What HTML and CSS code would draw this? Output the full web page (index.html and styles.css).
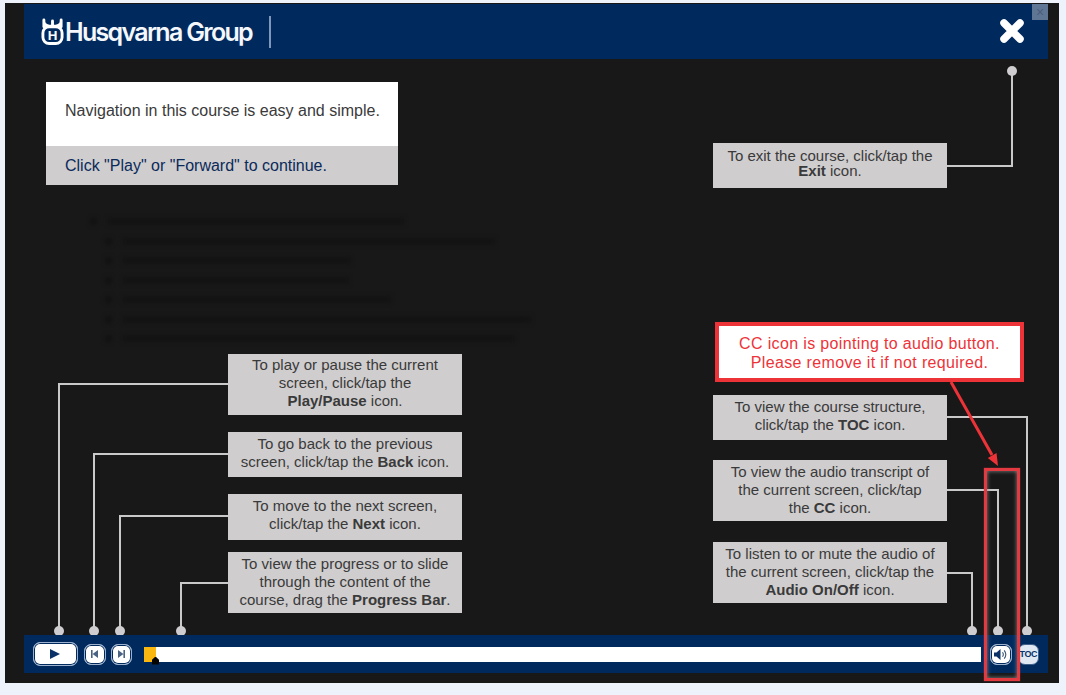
FILE: index.html
```html
<!DOCTYPE html>
<html lang="en">
<head>
    <meta charset="UTF-8">
    <meta name="viewport" content="width=device-width, initial-scale=1.0">
    <title>Husqvarna Group - Navigation</title>
    <link rel="stylesheet" href="styles.css">
</head>
<body>
    <div class="frame">
        <header class="topbar">
            <svg class="logo-mark" width="23" height="27" viewBox="0 0 24 28">
                <path d="M3 9V2M12 8V3M21 9V2M3 3.5c0 4 4 5 9 5s9-1 9-5" fill="none" stroke="#fff" stroke-width="3" stroke-linecap="round"/>
                <rect x="2" y="9" width="20" height="17.5" rx="6.5" fill="none" stroke="#fff" stroke-width="3"/>
                <text x="12" y="23.3" text-anchor="middle" class="logo-h">H</text>
            </svg>
            <span class="logo-text">Husqvarna Group</span>
            <span class="logo-rule"></span>
            <button class="close-btn" aria-label="Exit">
                <svg width="26" height="26" viewBox="0 0 26 26">
                    <path d="M5 5L21 21M21 5L5 21" stroke="#fff" stroke-width="7.5" stroke-linecap="round"/>
                </svg>
            </button>
            <span class="corner-box">×</span>
        </header>

        <main class="stage">
            <div class="intro">
                <p class="intro-top">Navigation in this course is easy and simple.</p>
                <p class="intro-bottom">Click "Play" or "Forward" to continue.</p>
            </div>
            <!-- dimmed slide content behind the overlay -->
            <div class="ghost">
                <div class="ghost-row"><i class="ghost-dot"></i><b style="width: 296px"></b></div>
                <div class="ghost-row sub"><i class="ghost-dot"></i><b style="width: 372px"></b></div>
                <div class="ghost-row sub"><i class="ghost-dot"></i><b style="width: 228px"></b></div>
                <div class="ghost-row sub"><i class="ghost-dot"></i><b style="width: 226px"></b></div>
                <div class="ghost-row sub"><i class="ghost-dot"></i><b style="width: 268px"></b></div>
                <div class="ghost-row sub"><i class="ghost-dot"></i><b style="width: 408px"></b></div>
                <div class="ghost-row sub"><i class="ghost-dot"></i><b style="width: 392px"></b></div>
            </div>
        </main>

        <footer class="controls">
            <button class="ctl ctl-play" aria-label="Play">
                <svg width="10" height="10" viewBox="0 0 10 10"><path d="M0 0L10 5L0 10Z" fill="#0b3268"/></svg>
            </button>
            <button class="ctl" aria-label="Back">
                <svg width="7" height="8" viewBox="0 0 7 8"><path d="M0 0H1.6V8H0ZM7 0V8L1.6 4Z" fill="#4a6382"/></svg>
            </button>
            <button class="ctl" aria-label="Next">
                <svg width="7" height="8" viewBox="0 0 7 8"><path d="M7 0H5.4V8H7ZM0 0V8L5.4 4Z" fill="#4a6382"/></svg>
            </button>
            <div class="progress">
                <div class="progress-fill"></div>
                <span class="progress-knob"></span>
            </div>
            <button class="ctl ctl-audio" aria-label="Audio">
                <svg width="13" height="13" viewBox="0 0 13 13">
                    <path d="M0 4.5H2.5L6.5 1V12L2.5 8.5H0Z" fill="#0b3268"/>
                    <path d="M8.5 4.2C9.5 5.6 9.5 7.4 8.5 8.8M10.2 2.4C12.1 4.8 12.1 8.2 10.2 10.6" fill="none" stroke="#3b5474" stroke-width="1.1"/>
                </svg>
            </button>
            <button class="ctl ctl-toc">TOC</button>
        </footer>

        <svg class="leaders" width="1066" height="695" viewBox="0 0 1066 695">
            <g fill="none" stroke="#c9c9c9" stroke-width="2">
                <path d="M228 384H59V631"/>
                <path d="M228 454H94V631"/>
                <path d="M228 516H120V631"/>
                <path d="M228 583H181V631"/>
                <path d="M947 166H1012V71"/>
                <path d="M947 417H1027V631"/>
                <path d="M947 490H998V631"/>
                <path d="M947 573H972V631"/>
            </g>
            <g fill="#cfcdd0">
                <circle cx="59" cy="631" r="5"/>
                <circle cx="94" cy="631" r="5"/>
                <circle cx="120" cy="631" r="5"/>
                <circle cx="181" cy="631" r="5"/>
                <circle cx="1012" cy="71" r="5"/>
                <circle cx="972" cy="631" r="5"/>
                <circle cx="998" cy="631" r="5"/>
                <circle cx="1027" cy="631" r="5"/>
            </g>
        </svg>

        <div class="tip tip-left tip-play"><span>To play or pause the current<br>screen, click/tap the<br><b>Play/Pause</b> icon.</span></div>
        <div class="tip tip-left tip-back"><span>To go back to the previous<br>screen, click/tap the <b>Back</b> icon.</span></div>
        <div class="tip tip-left tip-next"><span>To move to the next screen,<br>click/tap the <b>Next</b> icon.</span></div>
        <div class="tip tip-left tip-progress"><span>To view the progress or to slide<br>through the content of the<br>course, drag the <b>Progress Bar</b>.</span></div>
        <div class="tip tip-right tip-exit"><span>To exit the course, click/tap the<br><b>Exit</b> icon.</span></div>
        <div class="tip tip-right tip-toc"><span>To view the course structure,<br>click/tap the <b>TOC</b> icon.</span></div>
        <div class="tip tip-right tip-cc"><span>To view the audio transcript of<br>the current screen, click/tap<br>the <b>CC</b> icon.</span></div>
        <div class="tip tip-right tip-audio"><span>To listen to or mute the audio of<br>the current screen, click/tap the<br><b>Audio On/Off</b> icon.</span></div>

        <!-- review note drawn over the screenshot -->
        <svg class="arrow" width="1066" height="695" viewBox="0 0 1066 695">
            <path d="M951 382L992 455" stroke="#ee3338" stroke-width="3" fill="none"/>
            <path d="M998 466L987.8 458L996.5 453Z" fill="#ee3338"/>
        </svg>
        <div class="note">CC icon is pointing to audio button.<br>Please remove it if not required.</div>
        <div class="note-box"></div>
    </div>
</body>
</html>
```

FILE: styles.css
```css
* {
    box-sizing: border-box;
}

html, body {
    margin: 0;
    height: 100%;
    overflow: hidden;
    background: #eef3fb;
}

body {
    padding: 3px 0 0 5px;
    font-family: "Liberation Sans", Arial, sans-serif;
}

.frame {
    position: relative;
    display: flex;
    flex-direction: column;
    width: 1054px;
    height: 680px;
    padding: 1px 11px 10px 19px;
    background: #181818;
}

.topbar {
    position: relative;
    display: flex;
    align-items: center;
    flex: 0 0 55px;
    padding-left: 17px;
    background: #002a5e;
}

.logo-mark {
    flex: none;
    margin-top: -1px;
}

.logo-h {
    font-family: "Liberation Sans", Arial, sans-serif;
    font-size: 14px;
    font-weight: bold;
    fill: #fff;
}

.logo-text {
    margin-left: 1px;
    font-family: "Inter", sans-serif;
    font-size: 25px;
    font-weight: 600;
    letter-spacing: -1.7px;
    color: #f4f7fb;
}

.logo-rule {
    width: 2px;
    height: 32px;
    margin-left: 17px;
    background: #7f97b8;
}

.close-btn {
    position: absolute;
    top: 14px;
    right: 23px;
    width: 26px;
    height: 26px;
    padding: 0;
    border: 0;
    background: none;
}

.corner-box {
    position: absolute;
    top: 0;
    right: 0;
    width: 16px;
    height: 16px;
    background: #5f7694;
    color: #4b5f7b;
    font-size: 14px;
    line-height: 16px;
    text-align: center;
}

.stage {
    flex: 1;
    padding: 23px 0 0 22px;
}

.intro {
    position: relative;
    z-index: 2;
    width: 352px;
}

.intro p {
    margin: 0;
    padding-left: 19px;
    font-size: 16px;
}

.intro-top {
    height: 64px;
    padding-top: 20px;
    line-height: 18px;
    background: #fff;
    color: #3a3a3a;
}

.intro-bottom {
    height: 39px;
    line-height: 39px;
    background: #cfcdce;
    color: #0b2a5a;
}

.ghost {
    margin: 27px 0 0 44px;
    filter: blur(2px);
}

.ghost-row {
    display: flex;
    align-items: center;
    gap: 11px;
    height: 19.5px;
}

.ghost-row.sub {
    padding-left: 15px;
}

.ghost-row b {
    height: 7px;
    background: #131313;
}

.ghost-dot {
    width: 7px;
    height: 7px;
    border-radius: 50%;
    background: #111;
}

.controls {
    position: relative;
    z-index: 2;
    display: flex;
    align-items: center;
    flex: 0 0 38px;
    padding: 0 9px;
    background: #002a5e;
}

.ctl {
    display: flex;
    align-items: center;
    justify-content: center;
    width: 21.5px;
    height: 21px;
    margin-right: 5px;
    padding: 0;
    border: 1px solid #9db2cf;
    border-radius: 7px;
    background: #fff;
    box-shadow: inset 0 0 0 1px #002a5e;
}

.ctl-play {
    width: 45px;
    height: 24px;
    margin-right: 6px;
    padding-right: 1px;
}

.ctl-audio {
    margin: 0 6px 0 9px;
}

.ctl-toc {
    margin: 0;
    border-color: #3f5f8a;
    background: #dfe8f3;
    box-shadow: none;
    color: #0b3268;
    font-family: "Liberation Sans", Arial, sans-serif;
    font-size: 9px;
    font-weight: bold;
    letter-spacing: -0.5px;
}

.progress {
    position: relative;
    flex: 1;
    height: 15px;
    margin-left: 7px;
    background: #fff;
}

.progress-fill {
    width: 12px;
    height: 15px;
    background: #f9b70f;
}

.progress-knob {
    position: absolute;
    top: 10px;
    left: 8px;
    width: 7px;
    height: 8px;
    background: #050505;
    clip-path: polygon(50% 0, 100% 40%, 100% 100%, 0 100%, 0 40%);
}

.leaders,
.arrow {
    position: absolute;
    top: -3px;
    left: -5px;
    pointer-events: none;
}

.leaders {
    z-index: 1;
}

.arrow {
    z-index: 3;
}

.tip {
    position: absolute;
    z-index: 2;
    display: flex;
    align-items: center;
    justify-content: center;
    width: 234px;
    background: #cfcdce;
    color: #3a3a3a;
    font-size: 15px;
    line-height: 18px;
    text-align: center;
}

.tip-left {
    left: 223px;
}

.tip-right {
    left: 708px;
}

.tip-play { top: 351px; height: 61px; padding-bottom: 4px; }
.tip-back { top: 429px; height: 45px; padding-bottom: 4px; }
.tip-next { top: 491px; height: 46px; padding-bottom: 4px; }
.tip-progress { top: 549px; height: 61px; padding-bottom: 2px; }
.tip-exit { top: 140px; height: 45px; padding-bottom: 6px; line-height: 15px; }
.tip-toc { top: 392px; height: 45px; padding-bottom: 4px; }
.tip-cc { top: 457px; height: 61px; padding-bottom: 2px; }
.tip-audio { top: 539px; height: 61px; padding-bottom: 2px; }

.note {
    position: absolute;
    z-index: 3;
    top: 319px;
    left: 710px;
    width: 309px;
    height: 60px;
    padding-top: 8px;
    border: 4px solid #ee3338;
    background: #fff;
    color: #ee3338;
    font-size: 16px;
    line-height: 19px;
    letter-spacing: 0.35px;
    text-align: center;
}

.note-box {
    position: absolute;
    z-index: 3;
    top: 465px;
    left: 979px;
    width: 36px;
    height: 213px;
    border: 3px solid #e23a40;
    box-shadow: inset 0 0 4px #888, 0 0 1px #e23a40;
}
```
